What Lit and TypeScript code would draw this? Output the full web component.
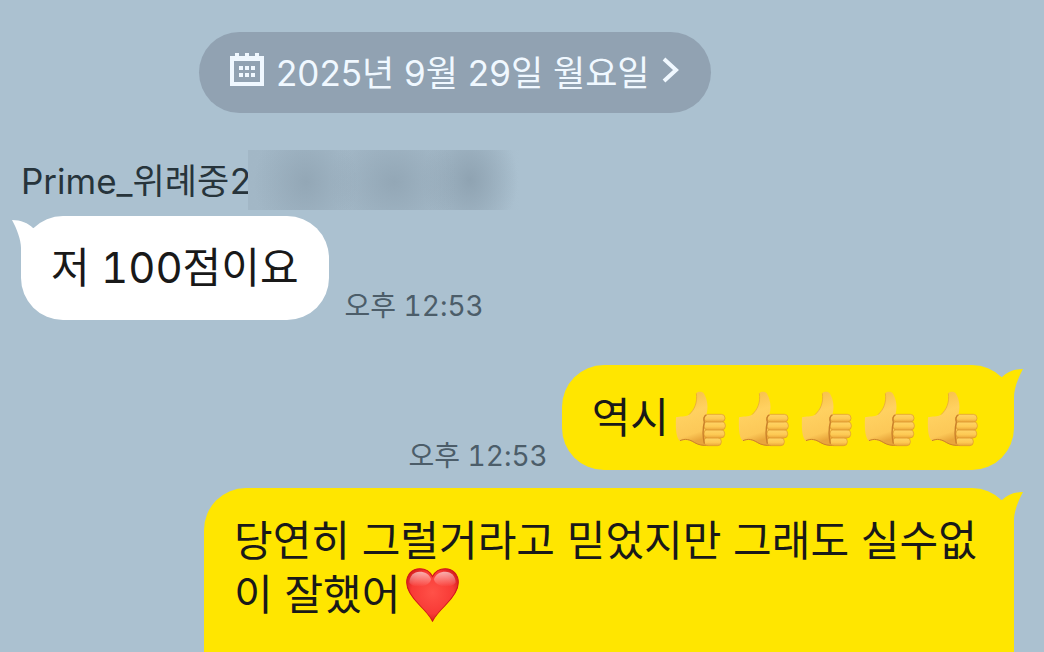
import { LitElement, html, css, svg } from "lit";
import { customElement, property } from "lit/decorators.js";

const heart = html`<svg class="emoji heart" viewBox="20 27 158 160" role="img" aria-label="❤️">
  <defs>
    <radialGradient id="hf" cx="0.5" cy="0.45" r="0.62">
      <stop offset="0" stop-color="#ff5148" />
      <stop offset="0.65" stop-color="#f83a36" />
      <stop offset="1" stop-color="#c91518" />
    </radialGradient>
    <linearGradient id="hs" x1="0" y1="0" x2="0" y2="1">
      <stop offset="0" stop-color="#fff" stop-opacity="0.6" />
      <stop offset="1" stop-color="#fff" stop-opacity="0" />
    </linearGradient>
  </defs>
  <path d="M99 52C91 36 77 29 61 29C38 29 22 46 22 70C22 98 45 122 62 139C78 155 90 168 99 185C108 168 120 155 136 139C153 122 176 98 176 70C176 46 160 29 137 29C121 29 107 36 99 52Z" fill="url(#hf)" stroke="#cf1719" stroke-width="3" />
  <path d="M30 70C31 50 43 38 61 38C77 38 88 45 95 60C90 84 40 90 30 70Z" fill="url(#hs)" />
  <path d="M168 70C167 50 155 38 137 38C121 38 110 45 103 60C108 84 158 90 168 70Z" fill="url(#hs)" />
</svg>`;

const finger = (x: number, y: number, w: number, h: number) => svg`
  <rect x=${x} y=${y} width=${w} height=${h} rx="11" fill="url(#tf)" stroke="#dc962c" stroke-width="2" />`;

const thumb = html`<svg class="emoji thumb" viewBox="45 18 156 168" role="img" aria-label="👍">
  <defs>
    <linearGradient id="tp" x1="0" y1="0" x2="0.2" y2="1">
      <stop offset="0" stop-color="#f6bd45" />
      <stop offset="0.45" stop-color="#ffd161" />
      <stop offset="0.85" stop-color="#fcc858" />
      <stop offset="1" stop-color="#e9a63c" />
    </linearGradient>
    <linearGradient id="tf" x1="0" y1="0" x2="0" y2="1">
      <stop offset="0" stop-color="#ffd568" />
      <stop offset="0.6" stop-color="#fdc953" />
      <stop offset="1" stop-color="#e9a53a" />
    </linearGradient>
  </defs>
  <path d="M109 25C114 19 127 19 132 26C142 43 146 66 139 90L146 180C130 183 116 181 104 174C88 164 75 162 60 168C50 160 46 138 48 97C60 92 76 97 87 89C102 76 113 54 109 25Z" fill="url(#tp)" />
  <path d="M109 25C113 52 104 74 87 89" fill="none" stroke="#e2a038" stroke-width="2" />
  <path d="M60 167C76 160 89 163 104 173C116 180 128 182 144 181" fill="none" stroke="#cc8128" stroke-width="3" />
  ${finger(132, 158, 52, 24)}
  ${finger(132, 134, 62, 25)}
  ${finger(132, 110, 64, 25)}
  ${finger(132, 88, 63, 23)}
  <path d="M139 90C132 94 130 102 133 111C128 132 129 158 133 176" fill="none" stroke="#c97f2a" stroke-width="4" />
</svg>`;

@customElement("chat-bubble")
class ChatBubble extends LitElement {
  @property({ type: Boolean, reflect: true }) mine = false;
  @property() time = "";

  static styles = css`
    :host {
      display: flex;
      align-items: flex-end;
      gap: 16px;
      color: #191919;
    }
    :host([mine]) {
      flex-direction: row-reverse;
      gap: 14px;
    }
    .bubble {
      position: relative;
      box-sizing: border-box;
      max-width: 810px;
      padding: 25px 30px;
      border-radius: 42px;
      background: #fff;
      font-size: 42px;
      line-height: 54px;
    }
    :host([mine]) .bubble {
      padding-top: 26px;
      background: #ffe600;
    }
    :host(.open) .bubble {
      align-self: stretch;
      border-radius: 42px 42px 0 0;
    }
    .tail {
      position: absolute;
      top: 4px;
      left: -9px;
      width: 32px;
      height: 40px;
      fill: #fff;
    }
    :host([mine]) .tail {
      left: auto;
      right: -9px;
      transform: scaleX(-1);
      fill: #ffe600;
    }
    time {
      font-size: 28px;
      line-height: 28px;
      font-variant-numeric: tabular-nums;
      color: #4c5d69;
      white-space: nowrap;
    }
  `;

  render() {
    return html`<div class="bubble">
        <svg class="tail" viewBox="0 0 32 40" aria-hidden="true">
          <path d="M0 0C9 0 16 3 21 8L32 12V40H9V28C9 20 5 9 0 0Z" />
        </svg>
        <slot></slot>
      </div>
      ${this.time ? html`<time>${this.time}</time>` : ""}`;
  }
}

@customElement("app-root")
class AppRoot extends LitElement {
  static styles = css`
    :host {
      display: flex;
      flex-direction: column;
      box-sizing: border-box;
      height: 100vh;
      overflow: hidden;
      padding: 32px 30px 0 21px;
      background: #abc1d0;
      font-family: Inter, "Noto Sans CJK KR", sans-serif;
    }
    .date {
      display: flex;
      align-items: center;
      align-self: flex-start;
      gap: 11px;
      height: 81px;
      margin: 0 0 0 178px;
      padding: 0 30px 5px;
      border: 0;
      border-radius: 41px;
      background: #91a2b2;
      color: #f0f8ff;
      font: inherit;
      font-size: 35px;
      white-space: nowrap;
    }
    .calendar {
      width: 36px;
      height: 36px;
    }
    .chevron {
      width: 20px;
      height: 28px;
    }
    .sender {
      display: flex;
      align-items: center;
      height: 60px;
      margin-top: 37px;
      color: #27343b;
      font-size: 35px;
      font-variant-numeric: tabular-nums;
      white-space: nowrap;
    }
    .name {
      padding-bottom: 4px;
    }
    .redacted {
      width: 272px;
      height: 60px;
      margin-left: -4px;
      background:
        radial-gradient(ellipse 52px 60px at 58px 32px, #93a7b6, transparent),
        radial-gradient(ellipse 64px 60px at 146px 32px, #93a7b6, transparent),
        radial-gradient(ellipse 48px 60px at 222px 30px, #8fa3b2, transparent),
        linear-gradient(90deg, #a2b7c6 0%, #a5bac9 82%, #abc1d0 100%);
    }
    .first {
      margin-top: 6px;
      font-variant-numeric: tabular-nums;
    }
    .reply {
      margin-top: 45px;
    }
    .last {
      flex: 1;
      margin-top: 18px;
    }
    .emoji {
      vertical-align: -12px;
    }
    .thumb {
      width: 52px;
      height: 56px;
      margin: -2px 5px -2px 6px;
    }
    .heart {
      width: 53px;
      height: 54px;
      margin-left: 6px;
    }
  `;

  render() {
    return html`
      <button class="date" type="button">
        <svg class="calendar" viewBox="0 0 36 36" fill="currentColor" aria-hidden="true">
          <path fill-rule="evenodd" d="M1 4H6V1H10V4H16V1H20V4H26V1H30V4H35V34H1ZM5 9V30H31V9Z" />
          <path d="M10 14h4v4h-4zM16 14h4v4h-4zM22 14h4v4h-4zM10 21h4v4h-4zM16 21h4v4h-4zM22 21h4v4h-4z" />
        </svg>
        <span>2025년 9월 29일 월요일</span>
        <svg class="chevron" viewBox="0 0 20 28" fill="none" stroke="currentColor" stroke-width="4" aria-hidden="true">
          <path d="M3 3L15 14L3 25" />
        </svg>
      </button>
      <div class="sender"><span class="name">Prime_위례중2</span><span class="redacted"></span></div>
      <chat-bubble class="first" time="오후 12:53">저 100점이요</chat-bubble>
      <chat-bubble class="reply" mine time="오후 12:53">역시${[1, 2, 3, 4, 5].map(() => thumb)}</chat-bubble>
      <chat-bubble class="last open" mine>당연히 그럴거라고 믿었지만 그래도 실수없이 잘했어${heart}</chat-bubble>
    `;
  }
}
